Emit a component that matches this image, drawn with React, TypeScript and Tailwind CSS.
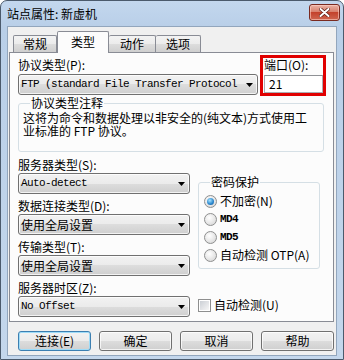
import React from "react";

function Arrow() {
  return (
    <svg width="7" height="4" viewBox="0 0 7 4" className="shrink-0">
      <path d="M0 0H7L3.5 4Z" fill="#000" />
    </svg>
  );
}

function Select({ text, className, mono }: { text: string; className: string; mono?: boolean }) {
  return (
    <div
      className={`flex h-[21px] items-center justify-between rounded-[3px] border border-[#707070] bg-[linear-gradient(#f2f2f2,#ebebeb_50%,#dddddd_50%,#cfcfcf)] pl-[2px] pr-[4px] shadow-[inset_0_0_0_1px_rgba(255,255,255,0.75)] ${className}`}
    >
      <span
        className={
          mono
            ? "whitespace-nowrap font-['Liberation_Mono',monospace] text-[11px] tracking-[-0.6px] leading-[19px]"
            : "whitespace-nowrap text-[12px] leading-[19px]"
        }
      >
        {text}
      </span>
      <Arrow />
    </div>
  );
}

function Radio({ label, checked, mono }: { label: string; checked?: boolean; mono?: boolean }) {
  return (
    <div className="flex h-[18px] items-center gap-[3px]">
      <div className="flex h-[13px] w-[13px] items-center justify-center rounded-full border border-[#8e8f8f] bg-[radial-gradient(circle_at_40%_35%,#ffffff,#e4e4e4_60%,#cfcfcf)]">
        {checked && (
          <div className="h-[7px] w-[7px] rounded-full bg-[radial-gradient(circle_at_40%_35%,#a8e4ff,#2f8bd0_55%,#0d4f92)]" />
        )}
      </div>
      <span
        className={
          mono
            ? "font-['Liberation_Mono',monospace] text-[11px] font-bold tracking-[-0.6px] leading-[18px]"
            : "text-[12px] leading-[18px] whitespace-nowrap"
        }
      >
        {label}
      </span>
    </div>
  );
}

function Button({ label, primary }: { label: string; primary?: boolean }) {
  return (
    <div
      className={
        primary
          ? "flex h-[20px] w-[73px] items-center justify-center rounded-[3px] border border-[#3c7fb1] bg-[linear-gradient(#f2f2f2,#ebebeb_50%,#dddddd_50%,#cfcfcf)] shadow-[inset_0_0_0_1px_#9fdcf8] text-[12px] leading-[18px]"
          : "flex h-[20px] w-[73px] items-center justify-center rounded-[3px] border border-[#707070] bg-[linear-gradient(#f2f2f2,#ebebeb_50%,#dddddd_50%,#cfcfcf)] shadow-[inset_0_0_0_1px_rgba(255,255,255,0.75)] text-[12px] leading-[18px]"
      }
    >
      {label}
    </div>
  );
}

export default function App() {
  return (
    <div className="flex h-[360px] w-[344px] flex-col rounded-t-[7px] border border-[#4b5a6c] bg-[linear-gradient(#c3d7ee,#b9cfe8_26px,#c4d7ec)] font-['Noto_Sans_CJK_SC',sans-serif] text-[12px] text-black">
      {/* Title bar */}
      <div className="flex h-[25px] shrink-0 justify-between pl-[6px]">
        <div className="self-center text-[12px] leading-[14px]">站点属性: 新虚机</div>
        <div className="mr-[3px] mt-[3px] flex h-[17px] w-[31px] items-center justify-center rounded-[3px] border border-[#7a2a20] bg-[linear-gradient(#eab2a5,#d8806d_45%,#c4422c_50%,#cf6650)] shadow-[inset_0_0_0_1px_rgba(255,210,200,0.6)]">
          <svg width="11" height="9" viewBox="0 0 11 9">
            <path d="M1.5 1L9.5 8M9.5 1L1.5 8" stroke="#5a1a12" strokeWidth="3.4" strokeLinecap="round" />
            <path d="M1.5 1L9.5 8M9.5 1L1.5 8" stroke="#ffffff" strokeWidth="2" strokeLinecap="round" />
          </svg>
        </div>
      </div>

      {/* Client */}
      <div className="mx-[6px] mb-[3px] flex flex-1 flex-col border border-[#92a6bd] bg-[#f0f0f0]">
        {/* Tabs */}
        <div className="relative z-10 -mb-[1px] flex h-[26px] items-end pl-[5px]">
          <div className="mb-[1px] flex h-[17px] w-[44px] items-center justify-center rounded-t-[2px] border border-b-0 border-[#898c95] bg-[linear-gradient(#f3f3f3,#ebebeb_50%,#dddddd_50%,#cfcfcf)] leading-[14px]">
            常规
          </div>
          <div className="flex h-[22px] w-[52px] items-center justify-center rounded-t-[2px] border border-b-0 border-[#898c95] bg-[#fcfcfc] pb-[2px] leading-[14px]">
            类型
          </div>
          <div className="mb-[1px] flex h-[17px] w-[47px] items-center justify-center rounded-t-[2px] border border-b-0 border-l-0 border-[#898c95] bg-[linear-gradient(#f3f3f3,#ebebeb_50%,#dddddd_50%,#cfcfcf)] leading-[14px]">
            动作
          </div>
          <div className="mb-[1px] flex h-[17px] w-[45px] items-center justify-center rounded-t-[2px] border border-b-0 border-l-0 border-[#898c95] bg-[linear-gradient(#f3f3f3,#ebebeb_50%,#dddddd_50%,#cfcfcf)] leading-[14px]">
            选项
          </div>
        </div>

        {/* Panel */}
        <div className="ml-[1px] flex h-[270px] w-[325px] flex-col border border-[#898c95] bg-[#fcfcfc] pl-[8px] pt-[2px]">
          {/* Top row */}
          <div className="flex">
            <div className="mt-[2px] flex flex-col">
              <div className="h-[17px] leading-[15px]">协议类型(P):</div>
              <Select text="FTP (standard File Transfer Protocol" mono className="w-[240px]" />
            </div>
            <div className="ml-[2px] h-[41px] w-[66px] border-[3px] border-[#e00000] pl-[1px]">
              <div className="h-[17px] leading-[13px] whitespace-nowrap">端口(O):</div>
              <div className="h-[18px] border border-[#abadb3] border-t-[#8f9195] bg-white pl-[4px] leading-[16px]">21</div>
            </div>
          </div>

          {/* Protocol note group */}
          <fieldset className="w-[306px] rounded-[3px] border border-[#d5dfe5] pb-[14px] pl-[4px]">
            <legend className="ml-[7px] px-[1px] leading-[14px]">协议类型注释</legend>
            <div className="whitespace-nowrap pt-[1px] leading-[13px]">
              这将为命令和数据处理以非安全的(纯文本)方式使用工
              <br />
              业标准的 FTP 协议。
            </div>
          </fieldset>

          {/* Lower section */}
          <div className="mt-[4px] flex gap-[8px]">
            <div className="flex w-[172px] flex-col">
              <div className="h-[17px] leading-[17px]">服务器类型(S):</div>
              <Select text="Auto-detect" mono className="w-[172px]" />
              <div className="mt-[3px] h-[17px] leading-[17px]">数据连接类型(D):</div>
              <Select text="使用全局设置" className="w-[172px]" />
              <div className="mt-[3px] h-[17px] leading-[17px]">传输类型(T):</div>
              <Select text="使用全局设置" className="w-[172px]" />
              <div className="mt-[3px] h-[17px] leading-[17px]">服务器时区(Z):</div>
              <Select text="No Offset" mono className="w-[172px]" />
            </div>
            <div className="flex flex-col pt-[19px]">
              <fieldset className="w-[122px] rounded-[3px] border border-[#d5dfe5] pb-[4px] pl-[5px] pt-[3px]">
                <legend className="ml-[6px] px-[1px] leading-[14px]">密码保护</legend>
                <Radio label="不加密(N)" checked />
                <Radio label="MD4" mono />
                <Radio label="MD5" mono />
                <Radio label="自动检测 OTP(A)" />
              </fieldset>
              <div className="mt-[27px] flex h-[18px] items-center gap-[3px]">
                <div className="flex h-[13px] w-[13px] items-center justify-center border border-[#8e8f8f] bg-white">
                  <div className="h-[9px] w-[9px] bg-[linear-gradient(135deg,#cbcfd5,#f6f6f6)]" />
                </div>
                <span className="leading-[18px] whitespace-nowrap">自动检测(U)</span>
              </div>
            </div>
          </div>
        </div>

        {/* Buttons */}
        <div className="ml-[10px] mt-[9px] flex gap-[8px]">
          <Button label="连接(E)" primary />
          <Button label="确定" />
          <Button label="取消" />
          <Button label="帮助" />
        </div>
      </div>
    </div>
  );
}
